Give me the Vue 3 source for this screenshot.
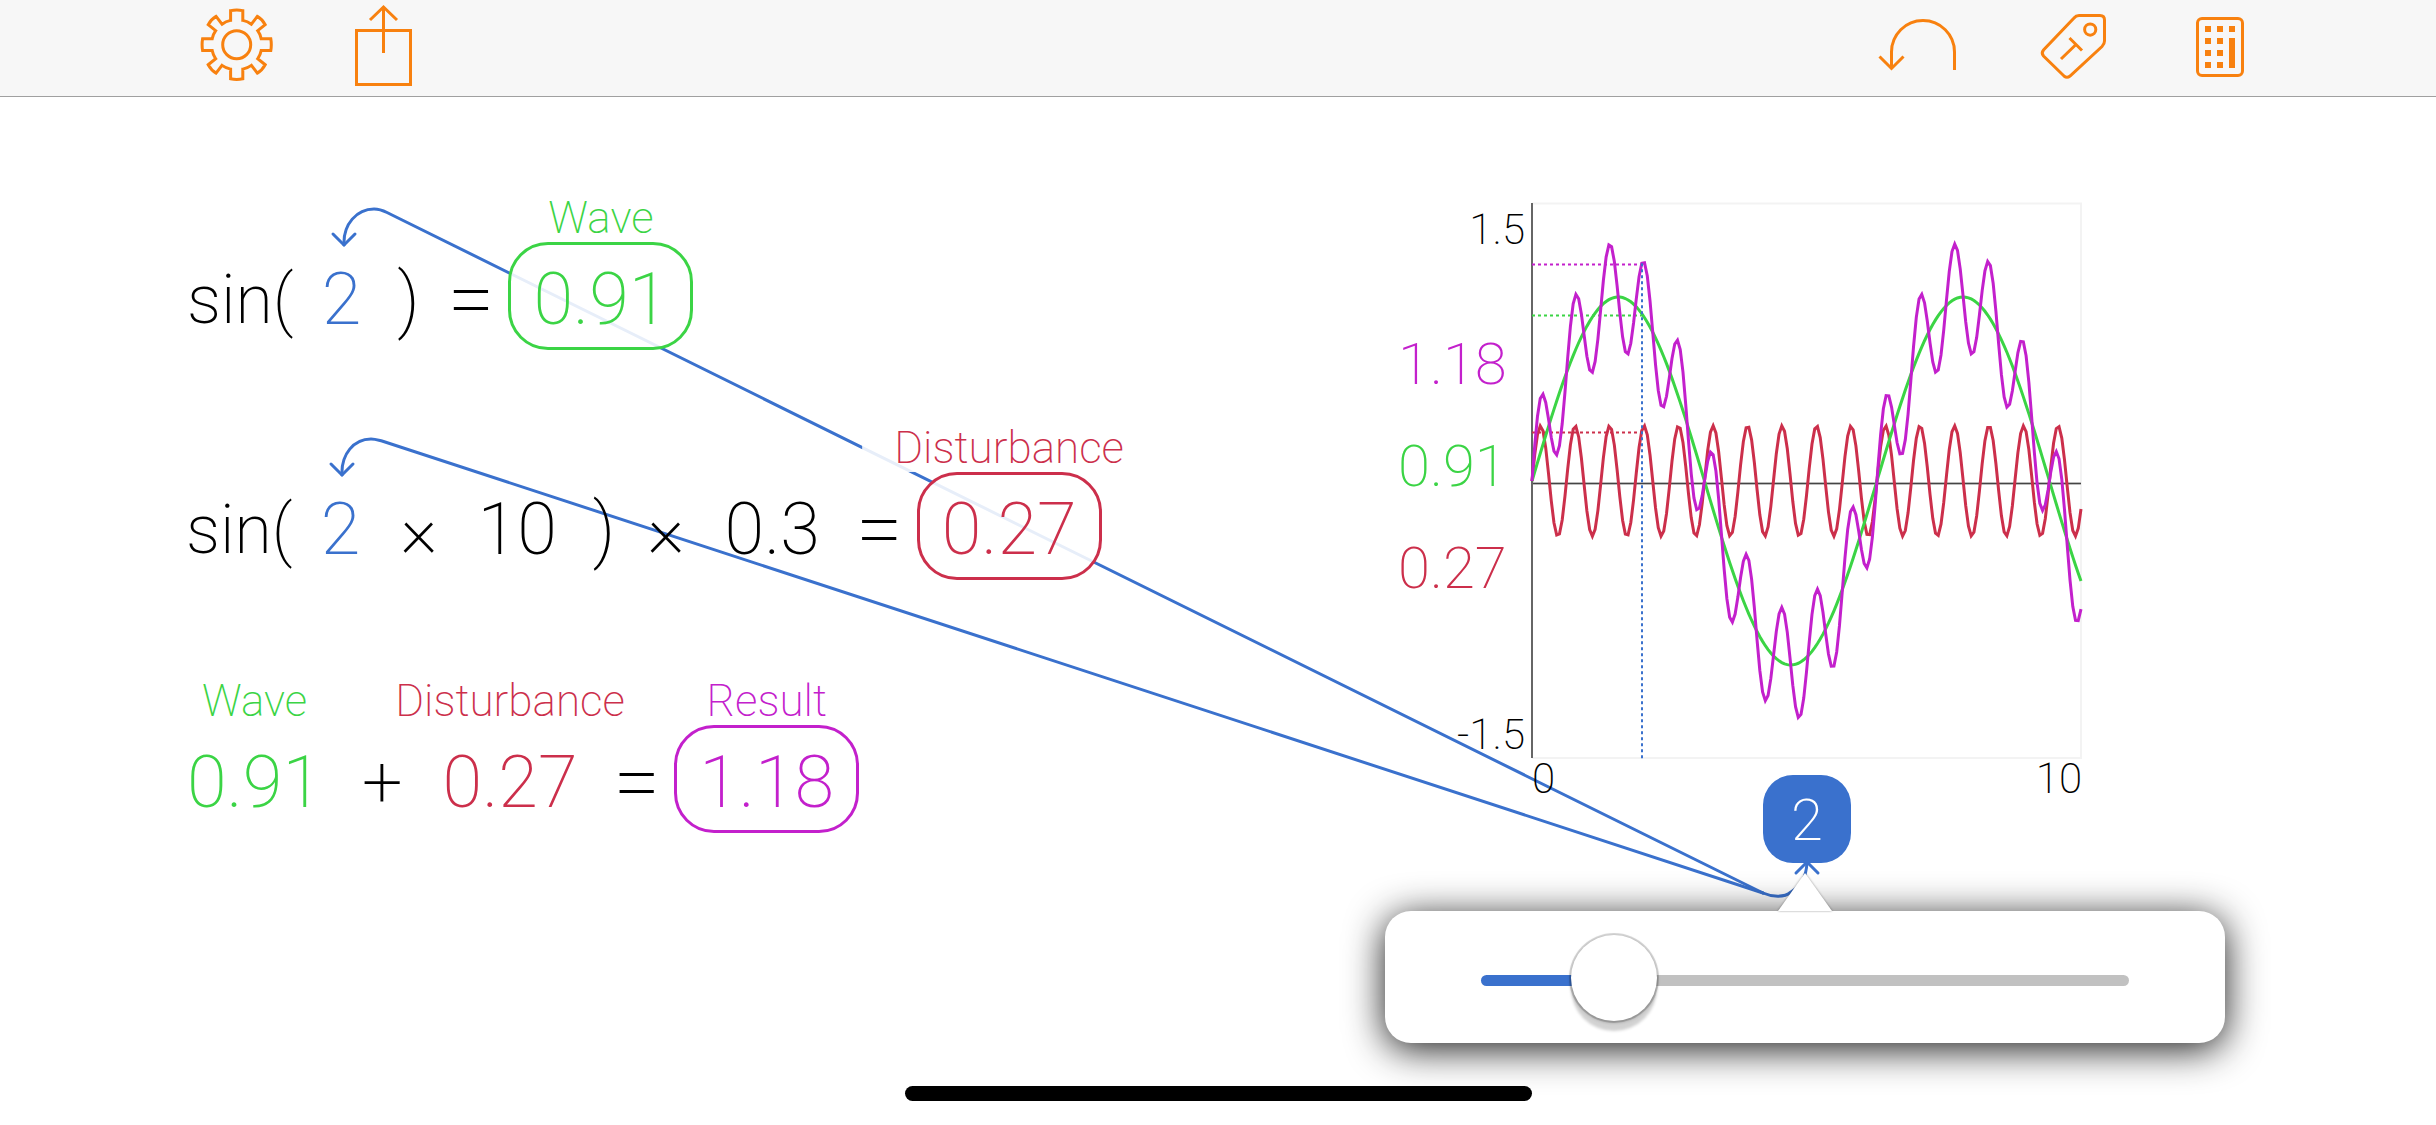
<script setup>
import { ref, computed } from 'vue';

const input = ref(2);
const sliderMax = 12.5;

const wave = (x) => Math.sin(x);
const disturbance = (x) => Math.sin(x * 10) * 0.3;
const result = (x) => wave(x) + disturbance(x);

const format = (fn) => fn(input.value).toFixed(2);

// nodes are placed freely on the canvas
const equations = computed(() => [
  {
    id: 'wave',
    x: 187,
    y: 145,
    tokens: [
      { text: 'sin(', kind: 'open' },
      { text: String(input.value), color: 'blue' },
      { text: ')', kind: 'close' },
      { text: '=', kind: 'equals' },
      { text: format(wave), color: 'green', label: 'Wave', kind: 'boxed' },
    ],
  },
  {
    id: 'disturbance',
    x: 186,
    y: 375,
    tokens: [
      { text: 'sin(', kind: 'open' },
      { text: String(input.value), color: 'blue' },
      { text: '×', kind: 'operator' },
      { text: '10' },
      { text: ')', kind: 'close' },
      { text: '×', kind: 'operator' },
      { text: '0.3' },
      { text: '=', kind: 'equals' },
      { text: format(disturbance), color: 'red', label: 'Disturbance', kind: 'boxed' },
    ],
  },
  {
    id: 'result',
    x: 187,
    y: 628,
    tokens: [
      { text: format(wave), color: 'green', label: 'Wave' },
      { text: '+', kind: 'operator' },
      { text: format(disturbance), color: 'red', label: 'Disturbance' },
      { text: '=', kind: 'equals' },
      { text: format(result), color: 'purple', label: 'Result', kind: 'boxed' },
    ],
  },
]);

const chart = { width: 549, height: 555, middle: 278, unit: 184, max: 10, samples: 200 };

/**
 * builds the points of a curve
 *
 * @param {Function} fn function to plot
 */
const plot = (fn) => {
  const points = [];
  for (let i = 0; i <= chart.samples; i++) {
    const x = (i / chart.samples) * chart.max;
    points.push(`${toX(x).toFixed(2)},${toY(fn(x)).toFixed(2)}`);
  }
  return points.join(' ');
}

function toX (x) {
  return (x / chart.max) * chart.width;
}

function toY (y) {
  return chart.middle - y * chart.unit;
}

const series = [
  { id: 'disturbance', fn: disturbance, color: 'red', valueY: 385 },
  { id: 'wave', fn: wave, color: 'green', valueY: 283 },
  { id: 'result', fn: result, color: 'purple', valueY: 181 },
];

const sliderFill = computed(() => `${(input.value / sliderMax) * 100}%`);
</script>

<template>
  <div class="app">
    <header class="toolbar">
      <div class="toolbar-group">
        <button type="button" aria-label="Settings">
          <svg viewBox="0 0 96 96">
            <path d="M42.6 10.6 Q48.7 9.4 54.8 10.6 V20.4 Q59.5 21.3 63.4 24.2 L69.3 16.4 Q74.2 19.2 77.2 24.7 L69.7 30.7 Q72.4 34.4 73.2 38.8 H82.8 Q83.8 44.7 82.8 50.6 H73.2 Q72.4 55 69.7 58.8 L77.2 64.7 Q74.2 70.2 69.3 73.1 L63.4 65.4 Q59.5 68.2 54.8 69.1 V78.8 Q48.7 80 42.6 78.8 V69.1 Q37.9 68.2 34 65.4 L28.1 73.1 Q23.2 70.2 20.2 64.7 L27.7 58.8 Q25 55 24.2 50.6 H14.6 Q13.6 44.7 14.6 38.8 H24.2 Q25 34.4 27.7 30.7 L20.2 24.7 Q23.2 19.2 28.1 16.4 L34 24.2 Q37.9 21.3 42.6 20.4 Z" />
            <circle cx="48.7" cy="44.7" r="14" />
          </svg>
        </button>
        <button type="button" aria-label="Share">
          <svg viewBox="0 0 96 96">
            <path d="M20.5 30.5 H74.5 V84.5 H20.5 Z M47.5 53 V7 M34 20 L47.5 7 L61 20" />
          </svg>
        </button>
      </div>
      <div class="toolbar-group">
        <button type="button" aria-label="Undo">
          <svg viewBox="0 0 96 96">
            <path d="M78.5 70 V52 A31.5 31.5 0 0 0 15.5 52 V68 M3.5 56.5 L15.5 68.5 L27.5 56.5" />
          </svg>
        </button>
        <button type="button" aria-label="Labels">
          <svg viewBox="0 0 96 96">
            <path d="M55 15.5 H76 Q80.5 15.5 80.5 20 V41 Q80.5 44 78 46.5 L46 76 Q43 78.5 40 76 L19.5 56 Q17 53 19.5 50 L50 18 Q52 15.5 55 15.5 Z" />
            <circle cx="66.2" cy="29.6" r="5.6" />
            <path d="M37 59 L52 44.5 M45.5 38 L58 50.5" />
          </svg>
        </button>
        <button type="button" aria-label="Keypad">
          <svg viewBox="0 0 96 96">
            <rect x="25.5" y="18.5" width="45" height="57" rx="4.5" />
            <path class="keys" d="M33 26h6v6h-6z M45 26h6v6h-6z M57 26h6v6h-6z M33 38h6v6h-6z M45 38h6v6h-6z M33 50h6v6h-6z M45 50h6v6h-6z M33 62h6v6h-6z M45 62h6v6h-6z M57 38h6v30h-6z" />
          </svg>
        </button>
      </div>
    </header>

    <main class="canvas">
      <!-- links from the input to every place it is used -->
      <svg class="links" width="1" height="1">
        <path d="M344 148 C343 127 357 112 374 112 C379 112 382 113 387 115.5 L1763 796" />
        <path d="M333 137 L344 148 L355 137" />
        <path d="M342 378 C341 357 354 342 371 342 C375 342 378 343 382 344 L1763 796" />
        <path d="M331 367 L342 378 L353 367" />
        <path d="M1763 796 C1772 800 1784 801 1791 795 C1802 788 1806 780 1807 766" />
        <path d="M1796 776 L1807 765 L1818 776" />
      </svg>

      <div
        v-for="equation in equations"
        :key="equation.id"
        class="equation"
        :style="{ left: `${equation.x}px`, top: `${equation.y}px` }"
      >
        <div
          v-for="(token, i) in equation.tokens"
          :key="i"
          :class="['token', token.color, token.kind]"
        >
          <span v-if="token.label" class="label">{{ token.label }}</span>
          <span>{{ token.text }}</span>
        </div>
      </div>

      <svg class="chart" :width="chart.width" :height="chart.height">
        <path class="frame" :d="`M0 0.5 H${chart.width} V${chart.height} H0`" />
        <path class="zero-soft" :d="`M0 280.5 H${chart.width}`" />
        <path class="zero" :d="`M0 280.5 H${chart.width}`" />
        <path class="axis" :d="`M0 0 V${chart.height}`" />
        <path
          v-for="s in series"
          :key="`guide-${s.id}`"
          :class="['guide', s.color]"
          :d="`M0 ${Math.round(toY(s.fn(input))) + 1.5} H${toX(input)}`"
        />
        <polyline
          v-for="s in series"
          :key="s.id"
          :class="['curve', s.color]"
          :points="plot(s.fn)"
        />
        <path class="guide blue" :d="`M${Math.round(toX(input))} ${toY(result(input))} V558`" />
        <text class="tick" x="-7" y="41" text-anchor="end">1.5</text>
        <text class="tick" x="-7" y="546" text-anchor="end">-1.5</text>
        <text class="tick" x="0" y="590">0</text>
        <text class="tick" x="550" y="590" text-anchor="end">10</text>
        <text
          v-for="s in series"
          :key="`value-${s.id}`"
          :class="['value', s.color]"
          x="-134"
          :y="s.valueY"
        >{{ format(s.fn) }}</text>
      </svg>

      <div class="badge">{{ input }}</div>

      <div class="popover">
        <svg class="pointer" viewBox="0 0 54 38">
          <path d="M0 38 L27 0 L54 38 Z" />
        </svg>
        <input
          v-model.number="input"
          type="range"
          min="0"
          :max="sliderMax"
          step="0.1"
          aria-label="Input value"
          :style="{ '--fill': sliderFill }"
        >
      </div>
    </main>

    <div class="home-indicator"></div>
  </div>
</template>

<style>
body {
  margin: 0;
  background: #fff;
}
</style>

<style scoped>
  .app {
    display: flex;
    flex-direction: column;
    min-height: 100vh;
    overflow: hidden;
    font-family: Roboto, "Liberation Sans", sans-serif;
    font-weight: 200;
    color: #000;
  }
  .toolbar {
    display: flex;
    justify-content: space-between;
    padding: 0 168px 0 188px;
    background: #f7f7f7;
    border-bottom: 1px solid #a0a0a0;
  }
  .toolbar-group {
    display: flex;
    gap: 52px;
  }
  .toolbar button {
    width: 96px;
    height: 96px;
    padding: 0;
    border: 0;
    background: none;
  }
  .toolbar svg {
    display: block;
    fill: none;
    stroke: #f8810f;
    stroke-width: 3;
  }
  .toolbar .keys {
    fill: #f8810f;
    stroke: none;
  }
  .canvas {
    position: relative;
    flex: 1;
  }
  .green { color: #3bd445; }
  .red { color: #cc2f4b; }
  .purple { color: #c320cc; }
  .blue { color: #3a71cd; }

  .links {
    position: absolute;
    top: 0;
    left: 0;
    overflow: visible;
    fill: none;
    stroke: #3a71cd;
    stroke-width: 3;
    stroke-linecap: round;
    stroke-linejoin: round;
  }
  .equation {
    position: absolute;
    display: flex;
    gap: 36px;
    font-size: 72px;
    line-height: 108px;
    white-space: nowrap;
  }
  .token {
    position: relative;
    box-sizing: border-box;
    height: 108px;
    padding-top: 4px;
  }
  .open {
    margin-right: -8px;
    font-size: 68px;
  }
  .close {
    margin-right: -8px;
  }
  .operator {
    margin: 0 4px;
  }
  .equals {
    font-size: 84px;
  }
  .boxed {
    margin-left: -22px;
    padding: 1px 22px 0;
    border: 3px solid currentColor;
    border-radius: 40px;
    background: rgba(255, 255, 255, 0.88);
  }
  .label {
    position: absolute;
    bottom: 100%;
    left: 50%;
    padding: 0 32px;
    background: rgba(255, 255, 255, 0.88);
    font-size: 44px;
    font-weight: 180;
    line-height: 48px;
    transform: translateX(-50%);
  }
  .boxed .label {
    bottom: calc(100% + 3px);
  }
  .chart {
    position: absolute;
    top: 106px;
    left: 1532px;
    overflow: visible;
    fill: none;
  }
  .frame {
    stroke: #f3f3f3;
    stroke-width: 2;
  }
  .axis {
    stroke: #666;
    stroke-width: 2;
  }
  .zero-soft {
    stroke: #bbb;
    stroke-width: 3;
  }
  .zero {
    stroke: #444;
    stroke-width: 1;
  }
  .curve {
    stroke: currentColor;
    stroke-width: 3;
  }
  .guide {
    stroke: currentColor;
    stroke-width: 2;
    stroke-dasharray: 3 3;
  }
  .tick {
    fill: #000;
    font-size: 42px;
  }
  .value {
    fill: currentColor;
    font-size: 58px;
  }
  .badge {
    position: absolute;
    top: 678px;
    left: 1763px;
    width: 88px;
    height: 88px;
    border-radius: 30px;
    background: #3a71cd;
    color: #fff;
    font-size: 58px;
    line-height: 90px;
    text-align: center;
  }
  .popover {
    position: absolute;
    top: 814px;
    left: 1385px;
    display: flex;
    align-items: center;
    box-sizing: border-box;
    width: 840px;
    height: 132px;
    padding: 6px 96px 0;
    border-radius: 26px;
    background: #fff;
    box-shadow: 0 6px 38px rgba(0, 0, 0, 0.9);
  }
  .pointer {
    position: absolute;
    bottom: 100%;
    left: 393px;
    width: 54px;
    height: 38px;
    fill: #fff;
    overflow: visible;
    filter: drop-shadow(0 0 1px rgba(0, 0, 0, 0.4));
  }
  .popover input {
    width: 100%;
    height: 88px;
    margin: 0;
    background: none;
    appearance: none;
    outline: none;
  }
  .popover input::-webkit-slider-runnable-track {
    height: 11px;
    border-radius: 6px;
    background: linear-gradient(to right, #3a71cd var(--fill), #c1c1c1 var(--fill));
  }
  .popover input::-webkit-slider-thumb {
    width: 86px;
    height: 86px;
    margin-top: -40px;
    border-radius: 50%;
    background: #fff;
    box-shadow: 0 0 0 2px rgba(0, 0, 0, 0.14), 0 1px 3px 1px rgba(0, 0, 0, 0.2), 0 10px 3px rgba(0, 0, 0, 0.18);
    appearance: none;
  }
  .home-indicator {
    align-self: center;
    width: 627px;
    height: 15px;
    margin-bottom: 24px;
    border-radius: 8px;
    background: #000;
  }
</style>
